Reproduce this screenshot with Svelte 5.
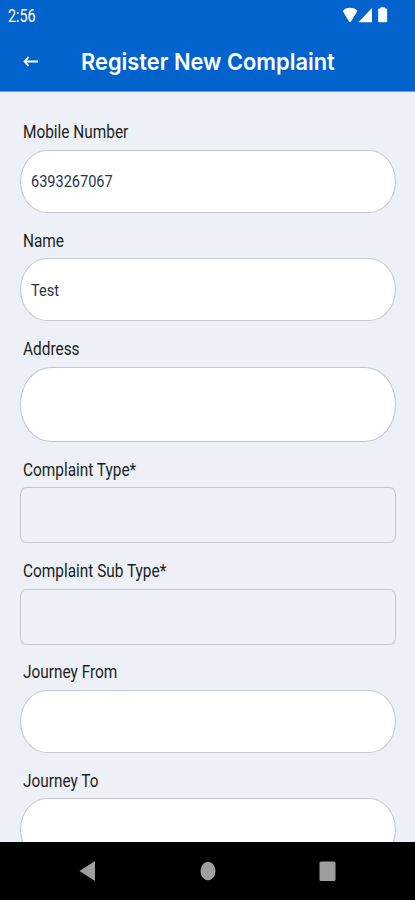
<script>
	let fields = $state([
		{ id: 'mobile', label: 'Mobile Number', kind: 'text', value: '6393267067' },
		{ id: 'name', label: 'Name', kind: 'text', value: 'Test' },
		{ id: 'address', label: 'Address', kind: 'area', value: '' },
		{ id: 'type', label: 'Complaint Type*', kind: 'select', value: '' },
		{ id: 'subtype', label: 'Complaint Sub Type*', kind: 'select', value: '' },
		{ id: 'from', label: 'Journey From', kind: 'text', value: '' },
		{ id: 'to', label: 'Journey To', kind: 'text', value: '' }
	]);
</script>

<div class="screen">
	<div class="status">
		<span class="time">2:56</span>
		<svg width="46" height="18" viewBox="0 0 46 18" fill="#fff">
			<path d="M0.7 5C3.500 0.500 12.500 0.500 15.500 5L9 15.500Q8 16.800 7 15.500Z" />
			<path d="M16.500 16.300L30 2V16.300Z" />
			<path d="M37 2.500h1.500V1.200h4.300V2.500h1.500q.8 0 .8.8v12.200q0 .8-.8.8h-7.300q-.8 0-.8-.8V3.300q0-.8.8-.8Z" />
		</svg>
	</div>

	<header>
		<button class="back" aria-label="Back">
			<svg width="16" height="12" viewBox="0 0 16 12" fill="none" stroke="#fff" stroke-width="1.8">
				<path d="M15 5.500H2M5.500 1.200L1.600 5.500L5.500 9.800" />
			</svg>
		</button>
		<h1>Register New Complaint</h1>
	</header>

	<main>
		{#each fields as field (field.id)}
			<label for={field.id}><span>{field.label}</span></label>
			<button class="field {field.kind}" id={field.id}><span>{field.value}</span></button>
		{/each}
	</main>

	<nav>
		<button aria-label="Back">
			<svg width="18" height="22" viewBox="0 0 18 22"><path d="M0.500 11L16 1V21Z" /></svg>
		</button>
		<button aria-label="Home">
			<svg width="18" height="22" viewBox="0 0 18 22"><ellipse cx="9" cy="11" rx="7.500" ry="9.200" /></svg>
		</button>
		<button aria-label="Recents">
			<svg width="18" height="22" viewBox="0 0 18 22"><rect x="0.500" y="1.500" width="16" height="19.500" rx="1.500" /></svg>
		</button>
	</nav>
</div>

<style>
	:global(body) {
		margin: 0;
		overflow: hidden;
	}

	.screen {
		display: flex;
		flex-direction: column;
		width: 415px;
		height: 900px;
		background: #edf1f7;
		font-family: Roboto, sans-serif;
	}

	button {
		margin: 0;
		padding: 0;
		border: none;
		background: none;
		font: inherit;
	}

	svg {
		display: block;
	}

	.status {
		display: flex;
		flex: none;
		justify-content: space-between;
		box-sizing: border-box;
		height: 33px;
		padding: 6px 27px 0 8px;
		background: #0263cc;
		color: #fff;
	}

	.time {
		font-size: 17.500px;
		line-height: 20px;
		transform: scaleX(0.82);
		transform-origin: left;
	}

	header {
		display: flex;
		flex: none;
		align-items: center;
		box-sizing: border-box;
		height: 59px;
		padding-left: 23px;
		border-bottom: 1px solid #73a5df;
		background: #0263cc;
	}

	h1 {
		margin: 0 0 0 42px;
		color: #fff;
		font-family: Inter, sans-serif;
		font-size: 23.500px;
		font-weight: 600;
		line-height: 32px;
		white-space: nowrap;
		transform: scaleX(0.93);
		transform-origin: left;
	}

	main {
		flex: 1;
		min-height: 0;
		padding: 12.600px 19.500px 0 20px;
		overflow: hidden;
	}

	label {
		display: block;
		box-sizing: border-box;
		height: 45.400px;
		padding: 16.900px 0 0 3px;
		color: #1c1e22;
		font-size: 18px;
		line-height: 21px;
	}

	label span,
	.field span {
		display: inline-block;
		white-space: nowrap;
		transform: scaleX(0.855);
		transform-origin: left;
	}

	.field {
		display: block;
		box-sizing: border-box;
		width: 100%;
		height: 63px;
		padding-left: 10px;
		border: 1px solid #c3c6cb;
		border-radius: 27px / 31.500px;
		background: #fff;
		color: #2b334e;
		font-size: 17px;
		text-align: left;
	}

	.field.area {
		height: 75px;
		border-radius: 31px / 37px;
	}

	.field.select {
		height: 56px;
		border-radius: 6px / 8px;
		background: transparent;
	}

	nav {
		display: flex;
		flex: none;
		align-items: center;
		justify-content: center;
		gap: 102px;
		height: 58px;
		background: #000;
		fill: #9e9e9e;
	}
</style>
